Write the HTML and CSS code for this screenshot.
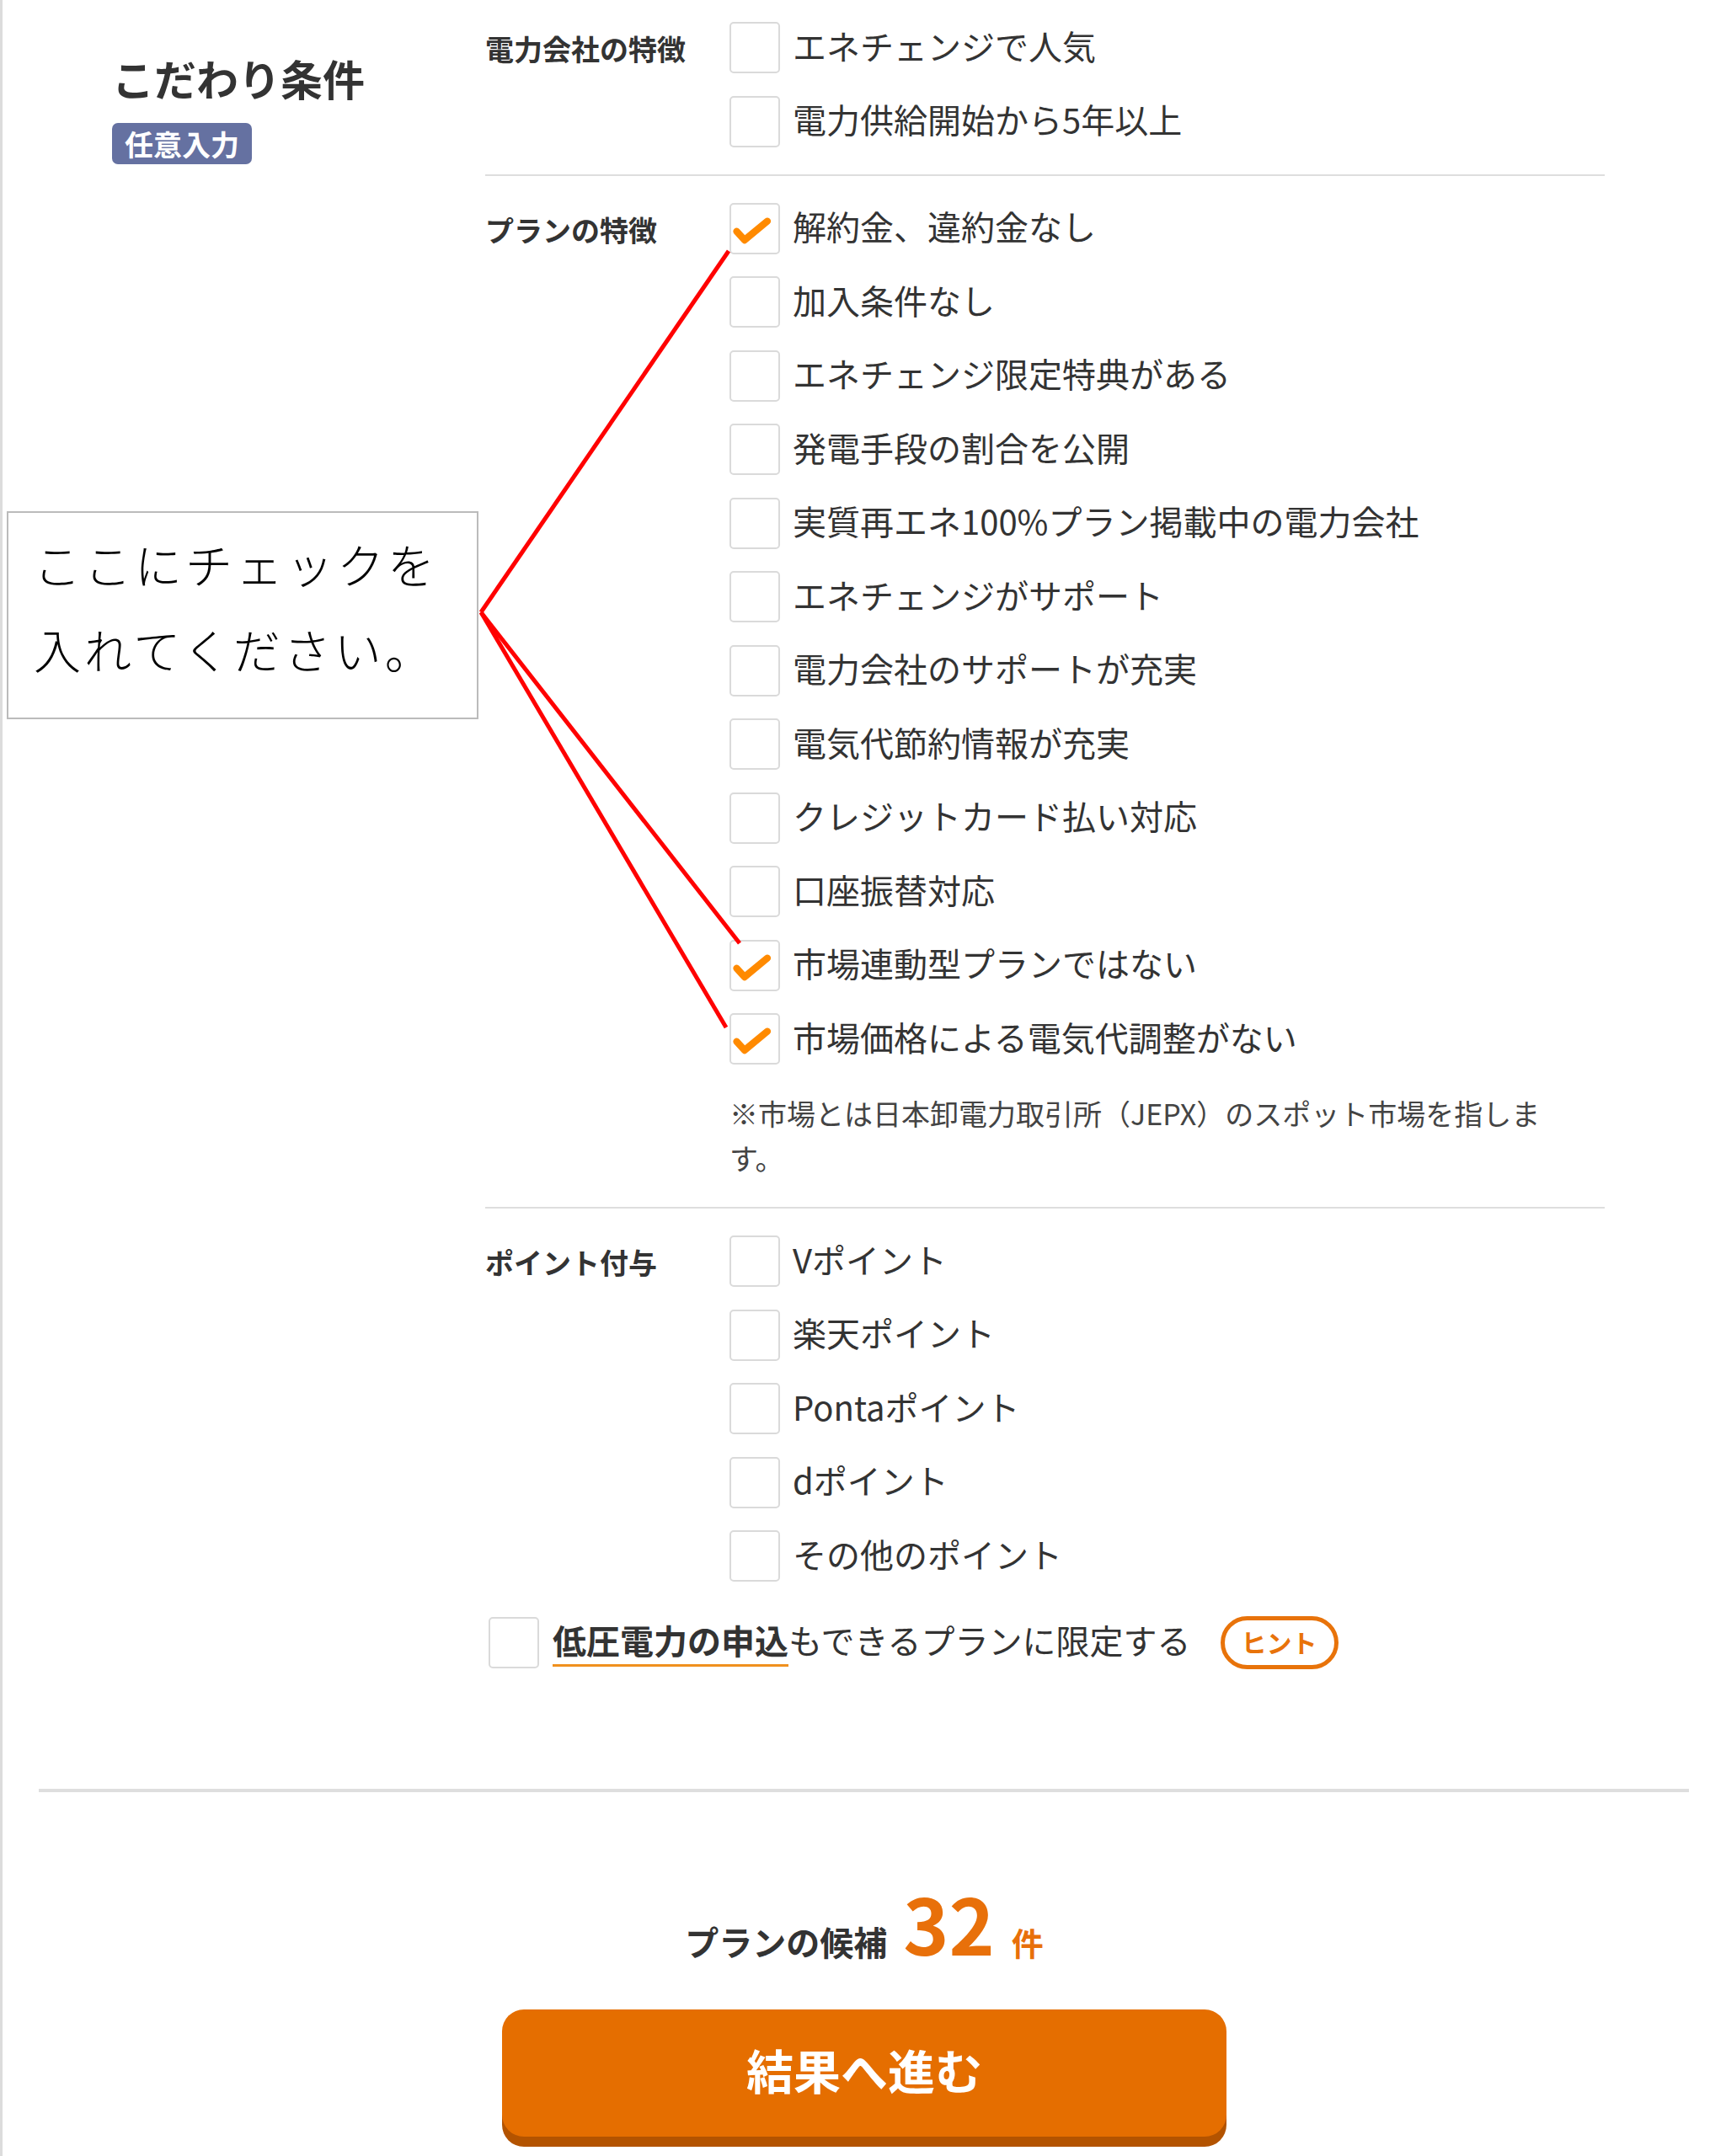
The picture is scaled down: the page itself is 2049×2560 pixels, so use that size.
FILE: index.html
```
<!DOCTYPE html>
<html lang="ja">
<head>
    <meta charset="UTF-8">
    <meta name="viewport" content="width=device-width, initial-scale=1.0">
    <title>こだわり条件</title>
    <link rel="stylesheet" href="styles.css">
</head>
<body>
    <div class="page">
        <div class="filter">
            <div class="filter-head">
                <h2 class="filter-title">こだわり条件</h2>
                <span class="badge">任意入力</span>
            </div>
            <div class="filter-body">
                <section class="group">
                    <h3 class="group-label">電力会社の特徴</h3>
                    <ul class="options">
                        <li class="option"><span class="box"></span><span class="option-text">エネチェンジで人気</span></li>
                        <li class="option"><span class="box"></span><span class="option-text">電力供給開始から5年以上</span></li>
                    </ul>
                </section>
                <section class="group">
                    <h3 class="group-label">プランの特徴</h3>
                    <div>
                        <ul class="options">
                            <li class="option"><span class="box checked"><svg viewBox="0 0 60 61"><polyline points="7,34 17,45 46,21"/></svg></span><span class="option-text">解約金、違約金なし</span></li>
                            <li class="option"><span class="box"></span><span class="option-text">加入条件なし</span></li>
                            <li class="option"><span class="box"></span><span class="option-text">エネチェンジ限定特典がある</span></li>
                            <li class="option"><span class="box"></span><span class="option-text">発電手段の割合を公開</span></li>
                            <li class="option"><span class="box"></span><span class="option-text">実質再エネ100%プラン掲載中の電力会社</span></li>
                            <li class="option"><span class="box"></span><span class="option-text">エネチェンジがサポート</span></li>
                            <li class="option"><span class="box"></span><span class="option-text">電力会社のサポートが充実</span></li>
                            <li class="option"><span class="box"></span><span class="option-text">電気代節約情報が充実</span></li>
                            <li class="option"><span class="box"></span><span class="option-text">クレジットカード払い対応</span></li>
                            <li class="option"><span class="box"></span><span class="option-text">口座振替対応</span></li>
                            <li class="option"><span class="box checked"><svg viewBox="0 0 60 61"><polyline points="7,34 17,45 46,21"/></svg></span><span class="option-text">市場連動型プランではない</span></li>
                            <li class="option"><span class="box checked"><svg viewBox="0 0 60 61"><polyline points="7,34 17,45 46,21"/></svg></span><span class="option-text">市場価格による電気代調整がない</span></li>
                        </ul>
                        <p class="note">※市場とは日本卸電力取引所（JEPX）のスポット市場を指します。</p>
                    </div>
                </section>
                <section class="group">
                    <h3 class="group-label">ポイント付与</h3>
                    <ul class="options">
                        <li class="option"><span class="box"></span><span class="option-text">Vポイント</span></li>
                        <li class="option"><span class="box"></span><span class="option-text">楽天ポイント</span></li>
                        <li class="option"><span class="box"></span><span class="option-text">Pontaポイント</span></li>
                        <li class="option"><span class="box"></span><span class="option-text">dポイント</span></li>
                        <li class="option"><span class="box"></span><span class="option-text">その他のポイント</span></li>
                    </ul>
                </section>
                <div class="limit">
                    <span class="box"></span>
                    <span class="limit-text"><b class="limit-key">低圧電力の申込</b>もできるプランに限定する</span>
                    <span class="hint">ヒント</span>
                </div>
            </div>
        </div>

        <hr class="rule">

        <p class="count">プランの候補<span class="count-num">32</span><span class="count-unit">件</span></p>
        <div class="actions">
            <button class="submit">結果へ進む</button>
        </div>
    </div>

    <div class="callout">ここにチェックを<br>入れてください。</div>
    <svg class="pointer" width="2049" height="2560" viewBox="0 0 2049 2560">
        <line x1="571" y1="727" x2="865" y2="298"/>
        <line x1="571" y1="727" x2="878" y2="1120"/>
        <line x1="571" y1="727" x2="862" y2="1220"/>
    </svg>
</body>
</html>
```

FILE: styles.css
```
body {
    margin: 0;
    position: relative;
    background: #fff;
    color: #333;
    font-family: "Noto Sans CJK JP", "Noto Sans", sans-serif;
}
.page {
    border-left: 3px solid #dcdcdc;
    min-height: 2560px;
    box-sizing: border-box;
}
.filter {
    display: flex;
    padding: 26px 0 0 130px;
}
.filter-head {
    width: 443px;
    padding-top: 36px;
}
.filter-title {
    margin: 0;
    font-size: 50px;
    line-height: 60px;
    font-weight: bold;
}
.badge {
    display: inline-block;
    margin-top: 24px;
    padding: 0 15px;
    height: 49px;
    line-height: 49px;
    background: #6571a1;
    color: #fff;
    font-size: 34px;
    font-weight: bold;
    border-radius: 7px;
}
.filter-body {
    width: 1329px;
}
.group {
    display: flex;
    padding: 32px 0;
    border-bottom: 2px solid #dedede;
}
.group:first-child {
    padding-top: 0;
}
.group:nth-child(3) {
    border-bottom: none;
    padding-bottom: 0;
}
.group-label {
    width: 290px;
    flex: none;
    margin: 0;
    font-size: 34px;
    line-height: 64px;
    font-weight: bold;
}
.options {
    list-style: none;
    margin: 0;
    padding: 0;
    display: flex;
    flex-direction: column;
    gap: 26.5px;
}
.option {
    display: flex;
    align-items: center;
    gap: 15px;
    height: 61px;
    font-size: 40px;
}
.option-text {
    margin-bottom: 6px;
}
.box {
    flex: none;
    width: 60px;
    height: 61px;
    box-sizing: border-box;
    border: 2px solid #dadada;
    border-radius: 5px;
    background: #fff;
}
.box svg {
    display: block;
    width: 56px;
    height: 57px;
}
.box polyline {
    fill: none;
    stroke: #ff8a00;
    stroke-width: 9;
    stroke-linecap: round;
    stroke-linejoin: round;
}
.note {
    width: 1000px;
    margin: 31px 0 0;
    font-size: 34px;
    line-height: 53px;
    color: #444;
}
.limit {
    display: flex;
    align-items: center;
    margin-top: 40px;
    padding-left: 4px;
    font-size: 40px;
}
.limit .box {
    margin-right: 16px;
}
.limit-text {
    margin-bottom: 6px;
}
.limit-key {
    font-weight: bold;
    border-bottom: 3px solid #f0901e;
}
.hint {
    margin-left: 35px;
    width: 140px;
    height: 63px;
    box-sizing: border-box;
    border: 5px solid #e8730a;
    border-radius: 32px;
    color: #e8730a;
    font-size: 30px;
    font-weight: bold;
    line-height: 50px;
    text-align: center;
}
.rule {
    margin: 142px 44px 0 43px;
    border: none;
    border-top: 4px solid #dedede;
}
.count {
    margin: 108px 0 0;
    text-align: center;
    font-size: 40px;
    font-weight: bold;
    line-height: 92px;
}
.count-num {
    margin: 0 20px 0 19px;
    font-size: 92px;
    color: #e8700a;
}
.count-unit {
    font-size: 38px;
    color: #e8700a;
}
.actions {
    display: flex;
    justify-content: center;
    margin-top: 34px;
}
.submit {
    width: 860px;
    height: 151px;
    padding: 0 0 10px;
    border: none;
    border-radius: 26px;
    background: #e56e00;
    box-shadow: 0 12px 0 #b35300;
    color: #fff;
    font-family: inherit;
    font-size: 56px;
    font-weight: bold;
    cursor: pointer;
}
.callout {
    position: absolute;
    left: 8px;
    top: 607px;
    width: 560px;
    height: 247px;
    box-sizing: border-box;
    border: 2px solid #bbb;
    background: #fff;
    padding: 9px 0 0 30px;
    color: #000;
    font-size: 56px;
    font-weight: 300;
    letter-spacing: 4px;
    line-height: 101px;
}
.pointer {
    position: absolute;
    left: 0;
    top: 0;
    pointer-events: none;
}
.pointer line {
    stroke: #f00;
    stroke-width: 5;
}
```
